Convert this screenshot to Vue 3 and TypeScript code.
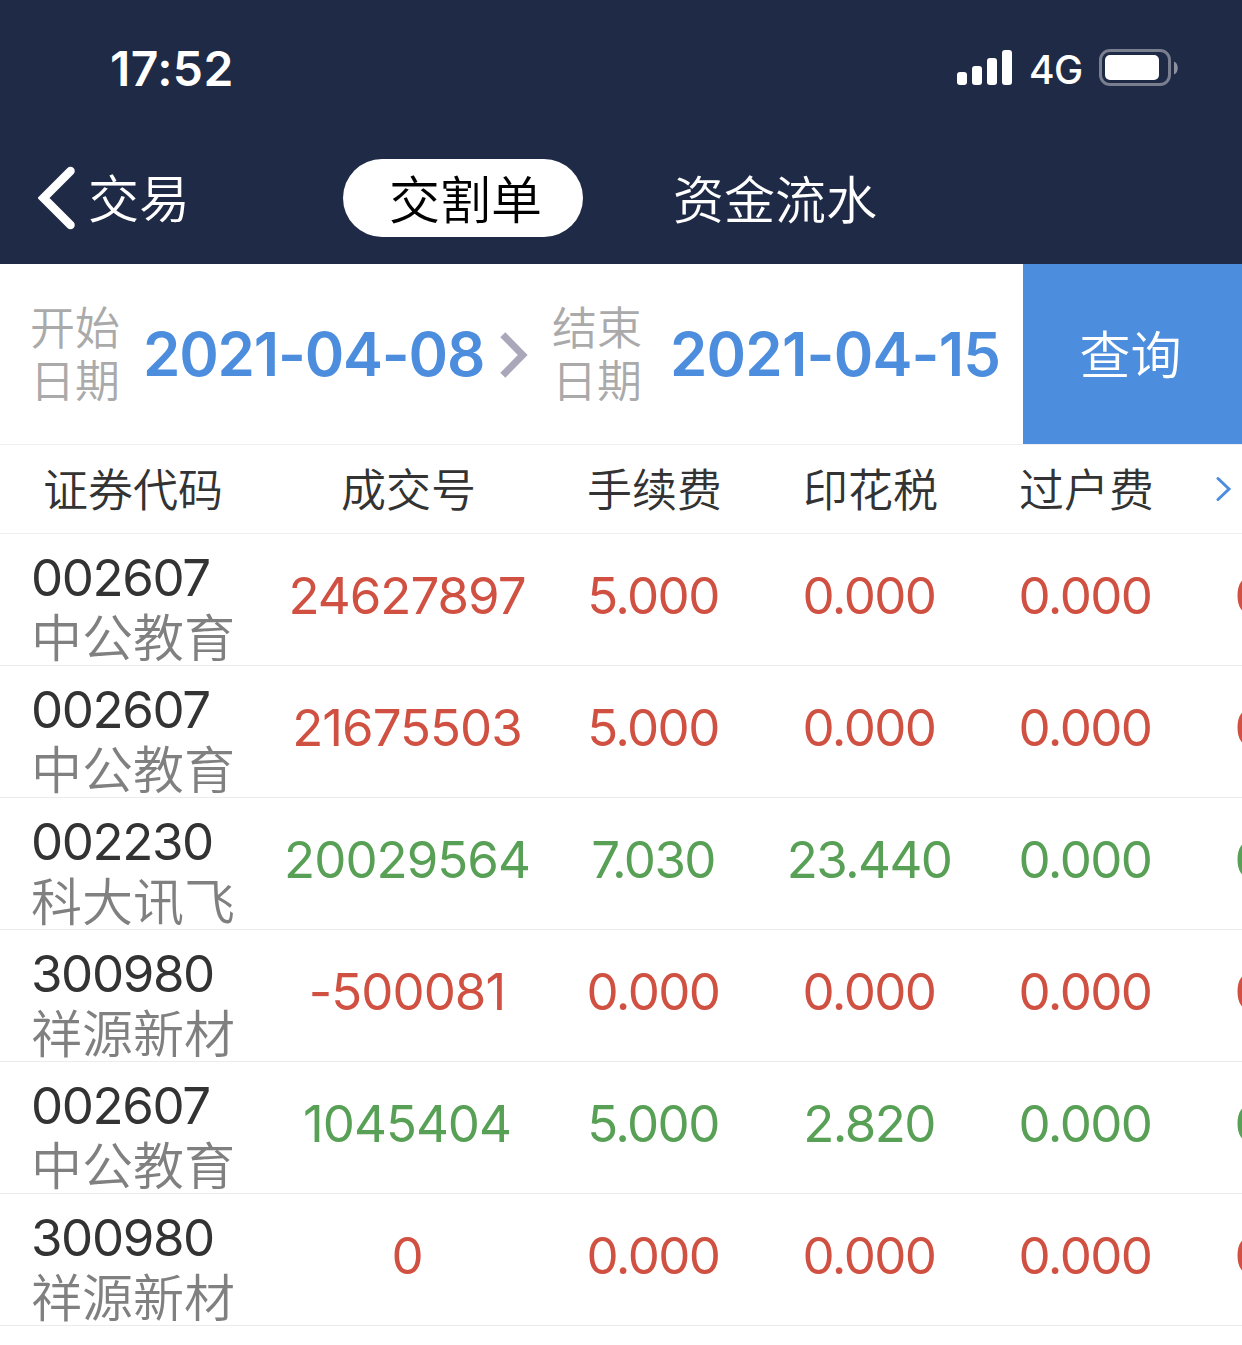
<script setup lang="ts">
interface Trade {
  code: string
  name: string
  deal: string
  values: string[]
  side: 'buy' | 'sell'
}

const columns: string[] = ['手续费', '印花税', '过户费']

const trades: Trade[] = [
  { code: '002607', name: '中公教育', deal: '24627897', values: ['5.000', '0.000', '0.000', '0.000'], side: 'buy' },
  { code: '002607', name: '中公教育', deal: '21675503', values: ['5.000', '0.000', '0.000', '0.000'], side: 'buy' },
  { code: '002230', name: '科大讯飞', deal: '20029564', values: ['7.030', '23.440', '0.000', '0.000'], side: 'sell' },
  { code: '300980', name: '祥源新材', deal: '-500081', values: ['0.000', '0.000', '0.000', '0.000'], side: 'buy' },
  { code: '002607', name: '中公教育', deal: '1045404', values: ['5.000', '2.820', '0.000', '0.000'], side: 'sell' },
  { code: '300980', name: '祥源新材', deal: '0', values: ['0.000', '0.000', '0.000', '0.000'], side: 'buy' },
]
</script>

<template>
  <div class="screen">
    <header class="top">
      <div class="status">
        <span class="time">17:52</span>
        <div class="indicators">
          <svg class="signal" width="56" height="36" viewBox="0 0 56 36" fill="#fff">
            <rect x="0" y="22" width="10" height="13" rx="3" />
            <rect x="15" y="16" width="10" height="19" rx="3" />
            <rect x="30" y="8" width="10" height="27" rx="3" />
            <rect x="45" y="0" width="10" height="35" rx="3" />
          </svg>
          <span class="network">4G</span>
          <svg class="battery" width="80" height="37" viewBox="0 0 80 37">
            <rect x="1.5" y="1.5" width="69" height="34" rx="9.5" fill="none" stroke="#797f8f" stroke-width="3" />
            <rect x="6" y="6" width="54" height="25" rx="5" fill="#fff" />
            <path d="M75 12.5c5 2 5 11 0 13z" fill="#8d919f" />
          </svg>
        </div>
      </div>
      <nav class="nav">
        <a class="back">
          <svg width="38" height="64" viewBox="0 0 38 64" fill="none" stroke="#fff" stroke-width="8.5" stroke-linecap="round">
            <path d="M32.5 5 5.5 32 32.5 59" stroke-linejoin="miter" />
          </svg>
          <span>交易</span>
        </a>
        <a class="tab active">交割单</a>
        <a class="tab other">资金流水</a>
      </nav>
    </header>

    <section class="filter">
      <div class="label">开始<br />日期</div>
      <div class="date from">2021-04-08</div>
      <svg class="arrow" width="28" height="46" viewBox="0 0 28 46" fill="none" stroke="#a9a7b9" stroke-width="7">
        <path d="M2.8 2.8 22.7 23 2.8 43.2" />
      </svg>
      <div class="label end">结束<br />日期</div>
      <div class="date">2021-04-15</div>
      <button class="query">查询</button>
    </section>

    <main class="table">
      <div class="head">
        <div class="first">证券代码</div>
        <div class="deal">成交号</div>
        <div v-for="c in columns" :key="c" class="cell">{{ c }}</div>
        <svg class="more" width="16" height="26" viewBox="0 0 16 26" fill="none" stroke="#4c8ddd" stroke-width="3" stroke-linecap="round">
          <path d="M2 2.5 13 13 2 23.5" />
        </svg>
      </div>
      <div v-for="(t, i) in trades" :key="i" class="row" :class="t.side">
        <div class="stock">
          <div class="code">{{ t.code }}</div>
          <div class="name">{{ t.name }}</div>
        </div>
        <div class="deal num">{{ t.deal }}</div>
        <div v-for="(v, j) in t.values" :key="j" class="cell num">{{ v }}</div>
      </div>
    </main>
  </div>
</template>

<style>
body {
  background: #fff;
}
</style>

<style scoped>
.screen {
  width: 1242px;
  height: 1345px;
  overflow: hidden;
  background: #fff;
  color: #333;
  font-family: Inter, "Noto Sans CJK SC", sans-serif;
  font-weight: 350;
  white-space: nowrap;
}
.top {
  height: 264px;
  background: #1f2a46;
  color: #fff;
}
.status {
  display: flex;
  justify-content: space-between;
  height: 132px;
  padding: 0 63px 0 110px;
}
.time {
  font-size: 48px;
  font-weight: 600;
  line-height: 138px;
  letter-spacing: 0.4px;
}
.indicators {
  display: flex;
  align-items: flex-start;
}
.signal {
  margin-top: 50px;
}
.network {
  width: 70px;
  padding-left: 16px;
  box-sizing: border-box;
  font-size: 39px;
  font-weight: 450;
  line-height: 139px;
  letter-spacing: -0.5px;
}
.battery {
  margin: 49px 0 0 16px;
}
.nav {
  display: flex;
  align-items: center;
  height: 132px;
  font-size: 51px;
}
.back {
  display: flex;
  align-items: center;
  width: 343px;
  padding-left: 38px;
  box-sizing: border-box;
}
.back span {
  padding: 0 0 5px 12px;
}
.nav .tab {
  height: 78px;
  padding: 0 46px;
  line-height: 83px;
}
.nav .active {
  width: 240px;
  box-sizing: border-box;
  border-radius: 39px;
  background: #fff;
  color: #000;
}
.nav .other {
  margin-left: 44px;
}
.filter {
  display: flex;
  align-items: center;
  height: 180px;
  padding-left: 30px;
}
.label {
  width: 113px;
  padding-top: 1px;
  color: #aaa;
  font-size: 45px;
  line-height: 53px;
}
.date {
  width: 352px;
  color: #4c8ddd;
  font-size: 60px;
  font-weight: 600;
  letter-spacing: -0.8px;
}
.date.from {
  width: 357px;
  letter-spacing: -1.2px;
}
.arrow {
  margin-top: 2px;
}
.end {
  width: 118px;
  margin-left: 24px;
}
.query {
  width: 219px;
  height: 180px;
  margin-left: auto;
  padding: 0 4px 4px 0;
  border: 0;
  background: #4c8ddd;
  color: #fff;
  font: inherit;
  font-size: 51px;
}
.head,
.row {
  display: flex;
  box-sizing: border-box;
}
.head {
  height: 90px;
  border: solid #efefef;
  border-width: 1px 0;
  font-size: 45px;
  line-height: 92px;
}
.first {
  width: 269px;
  padding-left: 43px;
  box-sizing: border-box;
}
.deal {
  flex: none;
  width: 276px;
  text-align: center;
}
.cell {
  flex: none;
  width: 216px;
  text-align: center;
}
.head .deal,
.head .cell {
  box-sizing: border-box;
  padding-left: 3px;
}
.more {
  margin: 31px 0 0 23px;
}
.row {
  height: 132px;
  border-bottom: 1px solid #ececec;
}
.stock {
  flex: none;
  width: 269px;
  padding-left: 31px;
  box-sizing: border-box;
  font-size: 51px;
}
.code {
  height: 74px;
  font-weight: 400;
  line-height: 87px;
  letter-spacing: -1.4px;
}
.name {
  color: #808080;
  line-height: 61px;
}
.num {
  font-size: 51px;
  font-weight: 400;
  line-height: 123px;
  letter-spacing: -1px;
}
.cell.num {
  letter-spacing: -1.6px;
}
.buy .num {
  color: #d05042;
}
.sell .num {
  color: #58a055;
}
</style>
